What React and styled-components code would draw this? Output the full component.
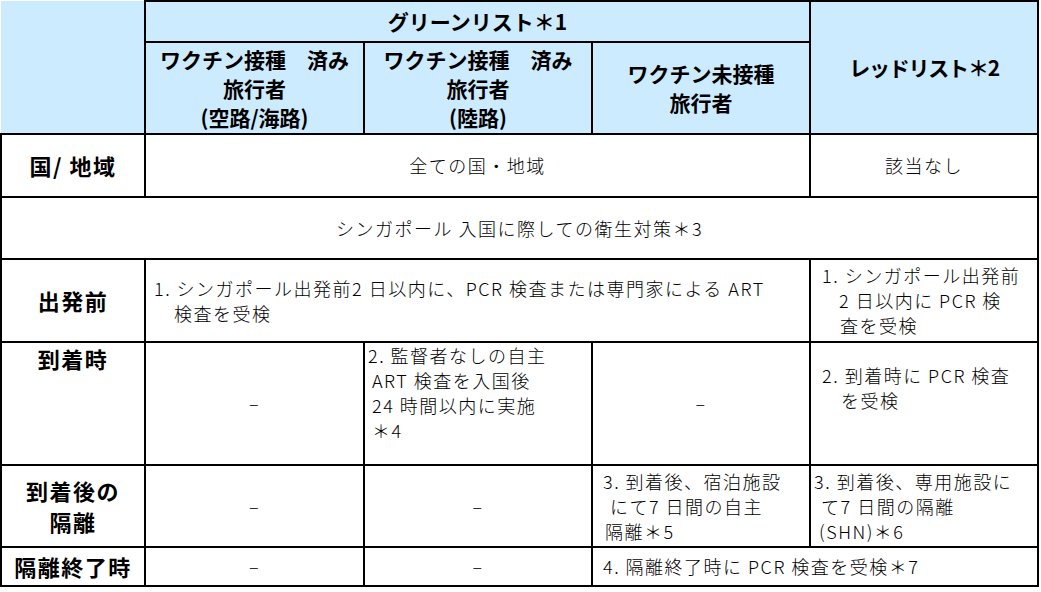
import React from 'react';
import styled, { createGlobalStyle } from 'styled-components';

const Global = createGlobalStyle`
  html, body { margin: 0; padding: 0; background: #ffffff; }
  body {
    font-family: "Noto Sans CJK JP", "Noto Sans", sans-serif;
    color: #000000;
  }
`;

const Table = styled.table`
  border-collapse: collapse;
  table-layout: fixed;
  width: 1039px;
`;

const Col = styled.col`
  width: ${(p) => p.$w}px;
`;

const Row = styled.tr`
  height: ${(p) => p.$h}px;
`;

const sizeFor = (p) => (p.$label ? 22 : p.$bold ? 21 : 18);
const lineFor = (p) => (p.$label ? 31 : p.$bold ? 29 : 25);
const spacingFor = (p) => (p.$tight ? '-1.2px' : p.$bold ? '0' : '1.5px');

const Cell = styled.td`
  border: 2px solid #000000;
  padding: ${(p) => p.$pad || '0'};
  background: ${(p) => (p.$head ? '#cdebff' : '#ffffff')};
  text-align: ${(p) => p.$align || 'center'};
  vertical-align: ${(p) => p.$valign || 'middle'};
  font-size: ${(p) => sizeFor(p)}px;
  font-weight: ${(p) => (p.$bold || p.$label ? 700 : 300)};
  line-height: ${(p) => lineFor(p)}px;
  letter-spacing: ${(p) => spacingFor(p)};
  white-space: nowrap;
  box-sizing: border-box;
  ${(p) => p.$corner && 'border-top-style: hidden; border-left-style: hidden;'}
`;

const Line = styled.span`
  display: block;
  padding-left: ${(p) => p.$indent || 0}px;
`;

const Dash = () => <span>–</span>;

const Lines = ({ items }) => (
  <>
    {items.map(([text, indent], i) => (
      <Line key={i} $indent={indent}>
        {text}
      </Line>
    ))}
  </>
);

export default function App() {
  return (
    <>
      <Global />
      <Table>
        <colgroup>
          <Col $w={144} />
          <Col $w={219} />
          <Col $w={228} />
          <Col $w={218} />
          <Col $w={228} />
        </colgroup>
        <tbody>
          <Row $h={41}>
            <Cell $head $corner rowSpan={2} />
            <Cell $head $bold colSpan={3}>
              グリーンリスト＊1
            </Cell>
            <Cell $head $bold $tight rowSpan={2}>
              レッドリスト＊2
            </Cell>
          </Row>
          <Row $h={92}>
            <Cell $head $bold>
              <Lines items={[['ワクチン接種　済み'], ['旅行者'], ['(空路/海路)']]} />
            </Cell>
            <Cell $head $bold>
              <Lines items={[['ワクチン接種　済み'], ['旅行者'], ['(陸路)']]} />
            </Cell>
            <Cell $head $bold>
              <Lines items={[['ワクチン未接種'], ['旅行者']]} />
            </Cell>
          </Row>
          <Row $h={63}>
            <Cell $label>国/ 地域</Cell>
            <Cell colSpan={3}>全ての国・地域</Cell>
            <Cell>該当なし</Cell>
          </Row>
          <Row $h={62}>
            <Cell colSpan={5}>シンガポール 入国に際しての衛生対策＊3</Cell>
          </Row>
          <Row $h={83}>
            <Cell $label>出発前</Cell>
            <Cell colSpan={3} $align="left" $pad="0 0 0 8px">
              <Lines
                items={[
                  ['1. シンガポール出発前2 日以内に、PCR 検査または専門家による ART'],
                  ['検査を受検', 20],
                ]}
              />
            </Cell>
            <Cell $align="left" $pad="0 0 0 11px">
              <Lines
                items={[
                  ['1. シンガポール出発前'],
                  ['2 日以内に PCR 検', 17],
                  ['査を受検', 18],
                ]}
              />
            </Cell>
          </Row>
          <Row $h={123}>
            <Cell $label $valign="top">
              到着時
            </Cell>
            <Cell>
              <Dash />
            </Cell>
            <Cell $align="left" $valign="top" $pad="0 0 0 3px">
              <Lines
                items={[
                  ['2. 監督者なしの自主'],
                  ['ART 検査を入国後', 4],
                  ['24 時間以内に実施', 4],
                  ['＊4', 4],
                ]}
              />
            </Cell>
            <Cell>
              <Dash />
            </Cell>
            <Cell $align="left" $valign="top" $pad="20px 0 0 11px">
              <Lines items={[['2. 到着時に PCR 検査'], ['を受検', 19]]} />
            </Cell>
          </Row>
          <Row $h={82}>
            <Cell $label>
              <Lines items={[['到着後の'], ['隔離']]} />
            </Cell>
            <Cell>
              <Dash />
            </Cell>
            <Cell>
              <Dash />
            </Cell>
            <Cell $align="left" $pad="0 0 0 10px">
              <Lines
                items={[
                  ['3. 到着後、宿泊施設'],
                  ['にて7 日間の自主', 7],
                  ['隔離＊5', 2],
                ]}
              />
            </Cell>
            <Cell $align="left" $pad="0 0 0 3px">
              <Lines
                items={[
                  ['3. 到着後、専用施設に'],
                  ['て7 日間の隔離', 7],
                  ['(SHN)＊6', 5],
                ]}
              />
            </Cell>
          </Row>
          <Row $h={39}>
            <Cell $label>隔離終了時</Cell>
            <Cell>
              <Dash />
            </Cell>
            <Cell>
              <Dash />
            </Cell>
            <Cell colSpan={2} $align="left" $pad="0 0 0 10px">
              4. 隔離終了時に PCR 検査を受検＊7
            </Cell>
          </Row>
        </tbody>
      </Table>
    </>
  );
}
